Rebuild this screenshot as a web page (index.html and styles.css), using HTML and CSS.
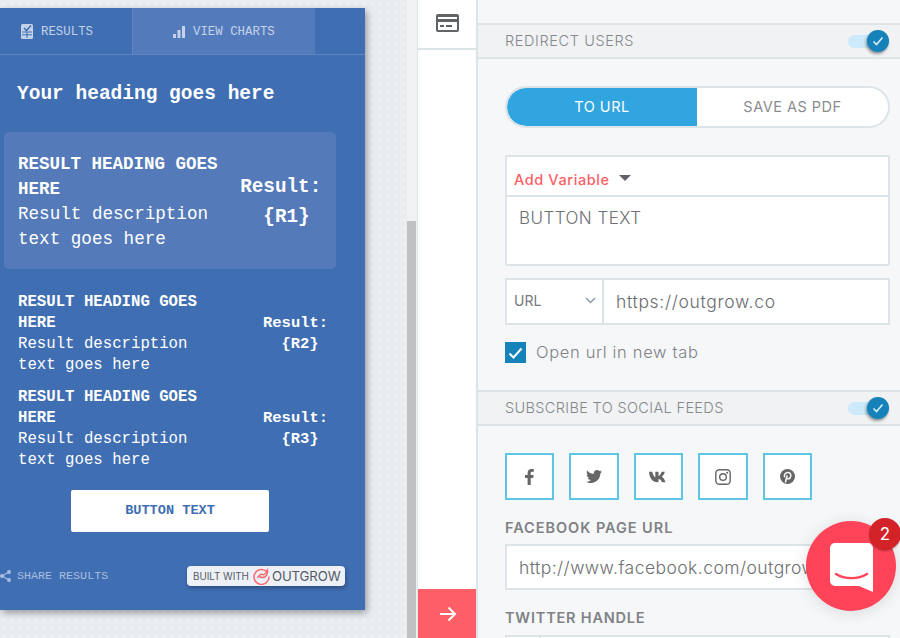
FILE: index.html
```html
<!DOCTYPE html>
<html lang="en">
<head>
<meta charset="utf-8">
<title>Outgrow builder</title>
<link rel="stylesheet" href="styles.css">
</head>
<body>
<div class="app">
  <section class="stage">
    <div class="card">
      <div class="tabs">
        <div class="tab tab-results">
          <svg class="tab-icon" width="13" height="15" viewBox="0 0 13 15"><rect x="0" y="0" width="12" height="15" rx="1.5" fill="#c3d2e8"/><path d="M3 4l2.5 2.5L10 1.5" fill="none" stroke="#3f6eb3" stroke-width="1.6"/><path d="M1 8h10M1 10.8h10M6 8v6" stroke="#3f6eb3" stroke-width="1"/></svg>
          <span>RESULTS</span>
        </div>
        <div class="tab tab-charts">
          <svg class="tab-icon" width="12" height="12" viewBox="0 0 12 12"><rect x="0" y="8" width="3" height="4" fill="#c3d2e8"/><rect x="4.5" y="4" width="3" height="8" fill="#c3d2e8"/><rect x="9" y="0" width="3" height="12" fill="#c3d2e8"/></svg>
          <span>VIEW CHARTS</span>
        </div>
      </div>
      <h1 class="heading">Your heading goes here</h1>
      <div class="result result-main">
        <div class="result-text">
          <h2>RESULT HEADING GOES HERE</h2>
          <p>Result description text goes here</p>
        </div>
        <div class="result-value">Result:&nbsp; {R1}</div>
      </div>
      <div class="result result-small">
        <div class="result-text">
          <h2>RESULT HEADING GOES HERE</h2>
          <p>Result description text goes here</p>
        </div>
        <div class="result-value">Result:&nbsp; {R2}</div>
      </div>
      <div class="result result-small">
        <div class="result-text">
          <h2>RESULT HEADING GOES HERE</h2>
          <p>Result description text goes here</p>
        </div>
        <div class="result-value">Result:&nbsp; {R3}</div>
      </div>
      <div class="cta-wrap"><div class="cta">BUTTON TEXT</div></div>
      <div class="card-foot">
        <div class="share">
          <svg width="11" height="12" viewBox="0 0 11 12"><path d="M9 2L2 6l7 4" fill="none" stroke="#a9bedd" stroke-width="1.2"/><circle cx="9" cy="2" r="2" fill="#a9bedd"/><circle cx="2" cy="6" r="2" fill="#a9bedd"/><circle cx="9" cy="10" r="2" fill="#a9bedd"/></svg>
          <span>SHARE RESULTS</span>
        </div>
        <div class="built">
          <span class="built-with">BUILT WITH</span>
          <svg class="built-logo" width="17" height="17" viewBox="0 0 17 17"><path d="M14 3.800A7.500 7.500 0 1 0 16 8.500" fill="none" stroke="#fb6a72" stroke-width="1.500"/><path d="M4.500 10c2-3.500 4-4 5-3.500 1 .5 3-.5 5-4.500.5 4-1.500 7.500-5 7.500-2 0-3-1-3-1" fill="none" stroke="#fb6a72" stroke-width="1.400"/></svg>
          <span class="built-name">OUTGROW</span>
        </div>
      </div>
    </div>
  </section>

  <div class="scrolltrack"><div class="scrollthumb"></div></div>

  <nav class="rail">
    <div class="rail-item">
      <svg width="23" height="18" viewBox="0 0 23 18"><rect x="0" y="0" width="23" height="18" rx="2" fill="#5f6368"/><rect x="2" y="3" width="19" height="2" fill="#fff"/><rect x="2" y="8" width="19" height="8" fill="#fff"/><rect x="4" y="11" width="4" height="2" fill="#5f6368"/><rect x="10" y="11" width="6" height="2" fill="#5f6368"/></svg>
    </div>
    <div class="rail-fill"></div>
    <div class="rail-next">
      <svg class="next-icon" width="18" height="16" viewBox="0 0 18 16"><path d="M1 8h15M9.500 1.500L16 8l-6.500 6.500" fill="none" stroke="#fff" stroke-width="2"/></svg>
    </div>
  </nav>

  <main class="panel">
    <div class="section-head first">
      <span class="head-redirect">REDIRECT USERS</span>
      <div class="toggle"><div class="knob"><svg width="12" height="10" viewBox="0 0 12 10"><path d="M1.500 5.500l3 3L10.500 1.500" fill="none" stroke="#d8eef8" stroke-width="1.600"/></svg></div></div>
    </div>
    <div class="section-body redirect">
      <div class="switch">
        <div class="switch-opt on">TO URL</div>
        <div class="switch-opt">SAVE AS PDF</div>
      </div>
      <div class="editor">
        <div class="editor-bar"><span class="add-var">Add Variable</span><span class="caret"></span></div>
        <div class="editor-text">BUTTON TEXT</div>
      </div>
      <div class="url-row">
        <div class="url-type"><span>URL</span><svg width="11" height="7" viewBox="0 0 11 7"><path d="M1 1l4.500 4.500L10 1" fill="none" stroke="#8a9aa8" stroke-width="1.500"/></svg></div>
        <div class="url-value">https://outgrow.co</div>
      </div>
      <div class="check-row">
        <div class="checkbox"><svg width="15" height="12" viewBox="0 0 15 12"><path d="M1.500 6.500l4 4L13.500 1.500" fill="none" stroke="#fff" stroke-width="2"/></svg></div>
        <span>Open url in new tab</span>
      </div>
    </div>
    <div class="section-head">
      <span class="head-social">SUBSCRIBE TO SOCIAL FEEDS</span>
      <div class="toggle"><div class="knob"><svg width="12" height="10" viewBox="0 0 12 10"><path d="M1.500 5.500l3 3L10.500 1.500" fill="none" stroke="#d8eef8" stroke-width="1.600"/></svg></div></div>
    </div>
    <div class="section-body social">
      <div class="social-row">
        <div class="soc soc-1"><svg width="9" height="16" viewBox="0 0 9 16"><path d="M2.600 16V9H0V6h2.600V4C2.600 1.400 4.100 0 6.500 0c1.100 0 2 .1 2.300.1v2.700H7.200c-1.200 0-1.500.6-1.500 1.500V6h2.900l-.4 3H5.700v7z" fill="#666"/></svg></div>
        <div class="soc soc-2"><svg width="16" height="13" viewBox="0 0 16 13"><path d="M16 1.500c-.6.300-1.200.4-1.900.5.700-.4 1.200-1 1.400-1.800-.6.400-1.300.6-2.100.8C12.800.4 12 0 11 0 9.200 0 7.700 1.500 7.700 3.300c0 .3 0 .5.100.7C5 3.900 2.600 2.600 1.100.6.800 1.100.7 1.600.7 2.200c0 1.100.6 2.100 1.500 2.700-.5 0-1-.2-1.500-.4 0 1.600 1.100 2.900 2.600 3.200-.5.100-1 .2-1.500.1.400 1.300 1.600 2.300 3.100 2.300C3.700 11.200 2 11.800.8 11.700H0c1.500.9 3.200 1.300 5 1.300 6 0 9.400-5 9.400-9.400v-.4c.7-.4 1.200-1 1.600-1.700z" fill="#666"/></svg></div>
        <div class="soc soc-3"><svg width="20" height="12" viewBox="0 0 19 11"><path d="M0 .5h3.200c.2 2 1.500 4.600 2.800 5.500V.5h3v4c1.200-.3 2.500-2 3-4h3c-.4 2.200-1.800 4-3 4.800 1.300.7 2.900 2.300 3.700 5.200h-3.400c-.5-1.700-1.700-3-3.300-3.200v3.200h-.9C3.500 10.500.5 7 0 .5z" fill="#666"/></svg></div>
        <div class="soc soc-4"><svg width="16" height="16" viewBox="0 0 16 16"><rect x=".8" y=".8" width="14.400" height="14.400" rx="3.500" fill="none" stroke="#666" stroke-width="1.400"/><circle cx="8" cy="8" r="3.300" fill="none" stroke="#666" stroke-width="1.400"/><circle cx="12.200" cy="3.800" r="1" fill="#666"/></svg></div>
        <div class="soc soc-5"><svg width="15" height="15" viewBox="0 0 15 15"><circle cx="7.500" cy="7.500" r="7.500" fill="#666"/><path d="M5.400 13.500l1.700-7.200M4.700 8.200C3.600 5.800 5.400 3.600 7.800 3.600c2.200 0 3.300 1.500 3 3.200-.3 1.800-1.300 3-2.700 3-.8 0-1.400-.6-1.300-1.300" fill="none" stroke="#f6f7f9" stroke-width="1.500"/></svg></div>
      </div>
      <label class="field-label">FACEBOOK PAGE URL</label>
      <div class="field">http://www.facebook.com/outgrow.co</div>
      <label class="field-label twitter">TWITTER HANDLE</label>
      <div class="field field-twitter"><div class="at"></div></div>
    </div>
  </main>
</div>

<div class="chat">
  <svg width="43" height="49" viewBox="0 0 43 49"><path d="M5 0h33a5 5 0 0 1 5 5v44l-14-6H5a5 5 0 0 1-5-5V5a5 5 0 0 1 5-5z" fill="#fff"/><path d="M6 31c9 5.500 22 5.500 31 0" fill="none" stroke="#ff4459" stroke-width="2.400" stroke-linecap="round"/></svg>
  <div class="badge">2</div>
</div>
</body>
</html>
```
FILE: styles.css
```css
* { box-sizing: border-box; }
html, body { margin: 0; height: 100%; overflow: hidden; }
body { font-family: "Inter", "Noto Sans", sans-serif; background: #f6f7f9; }
.app { display: flex; height: 638px; width: 900px; overflow: hidden; }

/* left preview */
.stage {
  width: 407px; flex: none; padding-top: 8px;
  background-color: #e9edf0;
  background-image: radial-gradient(circle, #f1f3f5 1px, transparent 1.2px);
  background-size: 8px 8px;
}
.card {
  width: 365px; height: 602px; background: #3f6eb3; color: #fff;
  box-shadow: 2px 3px 7px rgba(0,0,0,.35);
  font-family: "Liberation Mono", monospace;
  display: flex; flex-direction: column;
}
.tabs { display: flex; height: 47px; border-bottom: 1px solid #5f84bf; flex: none; }
.tab { display: flex; align-items: center; font-size: 12.400px; color: #c3d2e8; gap: 7px; height: 46px; margin-bottom: -1px; padding-top: 1px; }
.tab-results { width: 133px; padding-left: 21px; border-right: 1px solid #5f84bf; }
.tab-charts { width: 182px; padding-left: 40px; background: #537bbb; gap: 8px; }
.tab-icon { flex: none; }
.heading { margin: 26px 0 25px 17px; font-size: 19.500px; line-height: 26px; font-weight: 700; }
.result { display: flex; justify-content: space-between; align-items: center; }
.result h2, .result p { margin: 0; }
.result-value { text-align: center; font-weight: 700; flex: none; }
.result-main {
  margin: 0 29px 0 4px; padding: 20px 3px 17px 14px; background: #547ab9; border-radius: 5px;
  font-size: 17.600px; line-height: 25px;
}
.result-main h2 { font-size: 17.500px; }
.result-main .result-text { width: 205px; }
.result-main .result-value { width: 93px; font-size: 19.300px; line-height: 30px; }
.result-small { margin: 0 0 11px; padding: 0 28px 0 18px; font-size: 15.700px; line-height: 21px; }
.result-main + .result-small { margin-top: 23px; }
.result-small .result-text { width: 190px; }
.result-small .result-value { width: 74px; font-size: 15.500px; }
.result-small h2 { font-size: 15.700px; }
.result-text p { font-weight: 400; }
.cta-wrap { display: flex; justify-content: center; padding: 8px 96px 0 71px; }
.cta {
  width: 198px; height: 42px; background: #fff; color: #3f6eb3; border-radius: 2px;
  display: flex; align-items: center; justify-content: center;
  font-size: 13.600px; font-weight: 700; padding-bottom: 2px;
}
.card-foot { display: flex; justify-content: space-between; align-items: center; margin-top: 34px; padding-right: 20px; }
.share { display: flex; align-items: center; gap: 6px; color: #a9bedd; font-size: 11.700px; }
.built {
  width: 158px; height: 20px; background: #edf0f6; border-radius: 4px;
  box-shadow: 1px 2px 4px rgba(0,0,0,.3);
  display: flex; align-items: center; padding-left: 6px;
  font-family: "Inter", sans-serif; color: #555b66;
}
.built-with { font-size: 9.800px; white-space: nowrap; }
.built-logo { margin: 0 2px 0 4px; flex: none; }
.built-name { font-size: 13.200px; letter-spacing: -.1px; }

/* scrollbar */
.scrolltrack { width: 10px; flex: none; background: #f1f2f3; padding-top: 221px; }
.scrollthumb { width: 9px; height: 417px; background: #c1c1c1; }

/* rail */
.rail {
  width: 61px; flex: none; display: flex; flex-direction: column;
  background: #fff; border-left: 1px solid #dde4e8; border-right: 2px solid #dde4e8;
}
.rail-item { height: 50px; border-bottom: 2px solid #dde4e8; display: flex; align-items: center; justify-content: center; flex: none; padding-bottom: 2px; }
.rail-fill { flex: 1; }
.rail-next { height: 49px; flex: none; background: #fe5f66; display: flex; align-items: center; justify-content: center; }
.next-icon { margin-left: 2px; }

/* right panel */
.panel { flex: 1; min-width: 0; background: #f6f7f9; color: #808285; padding-top: 23px; }
.section-head {
  height: 36px; background: #f0f2f4;
  border-top: 2px solid #dde4e8; border-bottom: 2px solid #dde4e8;
  padding: 0 11px 2px 27px;
  display: flex; align-items: center; justify-content: space-between;
  font-size: 14.500px; color: #85888b; font-weight: 300;
}
.head-redirect { letter-spacing: .6px; }
.head-social { letter-spacing: .35px; }
.toggle { width: 41px; height: 13px; background: #cdeafa; border-radius: 7px; position: relative; margin-top: 2px; }
.knob {
  position: absolute; right: 0; top: -5px; width: 22px; height: 22px; border-radius: 50%;
  background: #1583b9; box-shadow: -1px 2px 3px rgba(0,0,0,.4);
  display: flex; align-items: center; justify-content: center;
}
.section-body { padding: 0 10px 0 27px; }
.redirect { height: 331px; padding-top: 27px; }
.switch {
  display: flex; height: 42px; width: 385px; border: 2px solid #dde4e8; border-radius: 21px;
  background: #fff; overflow: hidden; font-size: 14.500px; color: #8a8c8e; letter-spacing: .5px;
}
.switch-opt { flex: none; width: 190px; display: flex; align-items: center; justify-content: center; padding-bottom: 2px; }
.switch-opt:last-child { width: 191px; }
.switch-opt.on { background: #31a5e0; color: #fff; border-radius: 19px 0 0 19px; }
.editor { margin-top: 27px; width: 385px; height: 111px; background: #fff; border: 2px solid #dde4e8; border-radius: 2px; }
.editor-bar { height: 40px; border-bottom: 2px solid #dde4e8; display: flex; align-items: center; padding: 6px 0 0 7px; }
.add-var { color: #fe5f66; font-size: 14.500px; font-weight: 500; letter-spacing: .6px; }
.caret { margin-left: 9px; margin-top: -2px; border-style: solid; border-width: 6px 6px 0; border-color: #5f6368 transparent transparent; }
.editor-text { padding: 10px 0 0 12px; font-size: 17px; line-height: 22px; color: #6e7073; font-weight: 300; letter-spacing: .45px; }
.url-row { margin-top: 12px; display: flex; width: 385px; height: 47px; background: #fff; border: 2px solid #dde4e8; }
.url-type { width: 97px; border-right: 2px solid #dde4e8; display: flex; align-items: center; justify-content: space-between; padding: 0 6px 2px 7px; font-size: 14px; color: #77797c; flex: none; }
.url-value { display: flex; align-items: center; padding-left: 12px; font-size: 17.500px; color: #6a6c6f; font-weight: 300; letter-spacing: .68px; }
.check-row { margin-top: 17px; display: flex; align-items: center; gap: 10px; font-size: 16.500px; color: #808285; letter-spacing: .66px; font-weight: 300; }
.check-row span { margin-top: -2px; }
.checkbox { width: 21px; height: 21px; background: #1583b9; display: flex; align-items: center; justify-content: center; flex: none; }
.social { padding-top: 27px; }
.social-row { display: flex; gap: 15px; }
.soc { height: 47px; background: #fff; border: 2px solid #5cc6e4; display: flex; align-items: center; justify-content: center; flex: none; }
.soc-1 { width: 49px; }
.soc-2 { width: 50px; }
.soc-3 { width: 49px; }
.soc-4 { width: 50px; }
.soc-5 { width: 49px; }
.field-label { display: block; margin-top: 19px; font-size: 14.500px; line-height: 18px; font-weight: 600; color: #808285; letter-spacing: .95px; }
.field { margin-top: 7px; width: 385px; height: 46px; background: #fff; border: 2px solid #dde4e8; padding-left: 12px; display: flex; align-items: center; font-size: 17.500px; color: #6e7073; white-space: nowrap; overflow: hidden; font-weight: 300; letter-spacing: .45px; }
.field-label.twitter { margin-top: 19px; letter-spacing: .8px; }
.field-twitter { padding-left: 0; margin-top: 8px; }
.at { width: 34px; height: 100%; border-right: 2px solid #dde4e8; }

/* chat launcher */
.chat {
  position: absolute; left: 806px; top: 521px; width: 90px; height: 90px; border-radius: 50%;
  background: #ff4459; box-shadow: 0 2px 16px rgba(0,0,0,.12);
  display: flex; align-items: center; justify-content: center;
}
.chat svg { margin: 2px 0 0 0; }
.badge {
  position: absolute; left: 63px; top: -3px; width: 32px; height: 32px; border-radius: 50%;
  background: #d32329; color: #fff; font-size: 17px; box-shadow: 0 1px 2px rgba(0,0,0,.3);
  display: flex; align-items: center; justify-content: center;
}
```
